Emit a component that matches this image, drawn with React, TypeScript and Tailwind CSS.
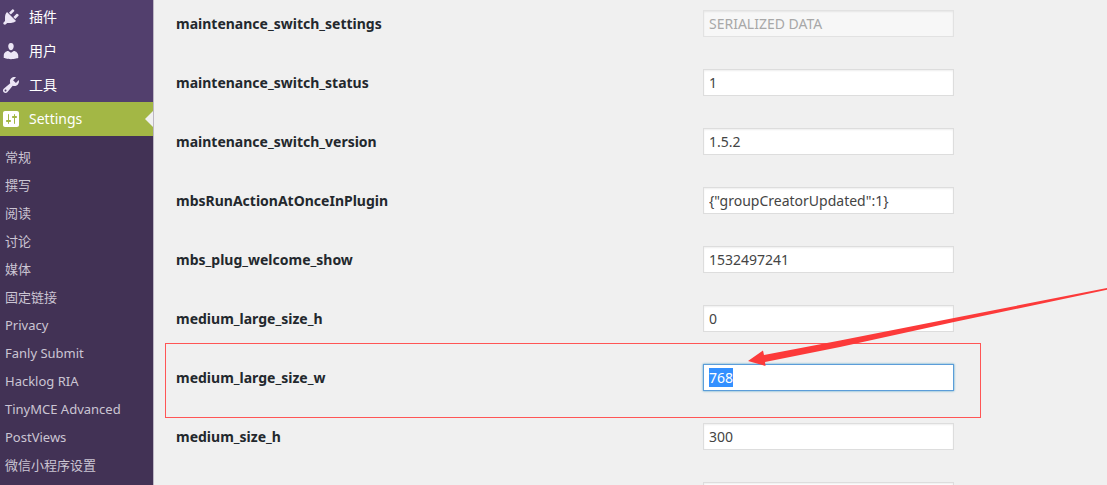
import { useEffect, useRef } from "react";

const menu = [
  {
    label: "插件",
    icon: "M13.11 4.36L9.87 7.6 8 5.73l3.24-3.24c.35-.34 1.05-.2 1.56.32.52.51.66 1.21.31 1.55zm-8 1.77l.91-1.12 9.01 9.01-1.19.84c-.71.71-2.63 1.16-3.82 1.16H6.14L4.9 17.26c-.59.59-1.54.59-2.12 0-.59-.58-.59-1.53 0-2.12l1.24-1.24v-3.88c0-1.13.4-3.19 1.09-3.89zm7.26 3.97l3.24-3.24c.34-.35 1.04-.21 1.55.31.52.51.66 1.21.31 1.55l-3.24 3.25z",
  },
  {
    label: "用户",
    icon: "M10 9.25c-2.27 0-2.73-3.44-2.73-3.44C7 4.02 7.82 2 9.97 2c2.16 0 2.98 2.02 2.71 3.81 0 0-.41 3.44-2.68 3.44zm0 2.57L12.72 10c2.39 0 4.52 2.33 4.52 4.53v2.49s-3.65 1.13-7.24 1.13c-3.65 0-7.24-1.13-7.24-1.13v-2.49c0-2.25 1.94-4.48 4.47-4.48z",
  },
  {
    label: "工具",
    icon: "M16.68 9.77c-1.34 1.34-3.3 1.67-4.95.99l-5.41 6.52c-.99.99-2.59.99-3.58 0s-.99-2.59 0-3.57l6.52-5.42c-.68-1.65-.35-3.61.99-4.95 1.28-1.28 3.12-1.62 4.72-1.06l-2.89 2.89 2.82 2.82 2.86-2.87c.53 1.58.18 3.39-1.08 4.65zM3.81 16.21c.4.39 1.04.39 1.43 0 .4-.4.4-1.04 0-1.43-.39-.4-1.03-.4-1.43 0-.39.39-.39 1.03 0 1.43z",
  },
  {
    label: "Settings",
    active: true,
    icon: "M18 16V4c0-1.1-.9-2-2-2H4c-1.1 0-2 .9-2 2v12c0 1.1.9 2 2 2h12c1.1 0 2-.9 2-2zM8 11h1c.55 0 1 .45 1 1s-.45 1-1 1H8v1.5c0 .28-.22.5-.5.5s-.5-.22-.5-.5V13H6c-.55 0-1-.45-1-1s.45-1 1-1h1V5.5c0-.28.22-.5.5-.5s.5.22.5.5V11zm5-2h-1c-.55 0-1-.45-1-1s.45-1 1-1h1V5.5c0-.28.22-.5.5-.5s.5.22.5.5V7h1c.55 0 1 .45 1 1s-.45 1-1 1h-1v5.5c0 .28-.22.5-.5.5s-.5-.22-.5-.5V9z",
  },
];

const submenu = [
  "常规",
  "撰写",
  "阅读",
  "讨论",
  "媒体",
  "固定链接",
  "Privacy",
  "Fanly Submit",
  "Hacklog RIA",
  "TinyMCE Advanced",
  "PostViews",
  "微信小程序设置",
];

const options = [
  { name: "maintenance_switch_settings", value: "SERIALIZED DATA", disabled: true },
  { name: "maintenance_switch_status", value: "1" },
  { name: "maintenance_switch_version", value: "1.5.2" },
  { name: "mbsRunActionAtOnceInPlugin", value: '{"groupCreatorUpdated":1}' },
  { name: "mbs_plug_welcome_show", value: "1532497241" },
  { name: "medium_large_size_h", value: "0" },
  { name: "medium_large_size_w", value: "768", selected: true },
  { name: "medium_size_h", value: "300" },
  { name: "medium_size_w", value: "300" },
];

function Sidebar() {
  return (
    <nav className="w-[154px] shrink-0 border-r border-[#bdb7c4] bg-[#523f6d]">
      <ul>
        {menu.map((item) => (
          <li key={item.label}>
            <a
              href="#"
              className={
                item.active
                  ? "relative flex h-[34px] items-center gap-2 bg-[#a3b745] fill-white pl-px text-sm text-white"
                  : "flex h-[34px] items-center gap-2 fill-[#ece6f6] pl-px text-sm text-white"
              }
            >
              <svg viewBox="0 0 20 20" className="size-5" aria-hidden="true">
                <path d={item.icon} />
              </svg>
              {item.label}
              {item.active && (
                <span className="absolute top-1/2 right-0 -translate-y-1/2 border-8 border-transparent border-r-[#f0f0f0]" />
              )}
            </a>
          </li>
        ))}
      </ul>
      <ul className="h-full bg-[#423255] pt-2">
        {submenu.map((label) => (
          <li key={label}>
            <a href="#" className="flex h-7 items-center pl-[5px] text-[13px] text-[#cbc5d3]">
              {label}
            </a>
          </li>
        ))}
      </ul>
    </nav>
  );
}

export default function App() {
  const selectedRef = useRef<HTMLInputElement>(null);

  useEffect(() => {
    selectedRef.current?.focus({ preventScroll: true });
    selectedRef.current?.select();
  }, []);

  return (
    <div className="flex h-screen overflow-hidden bg-[#f0f0f0] font-['Noto_Sans','Noto_Sans_CJK_SC',sans-serif]">
      <Sidebar />
      <main className="relative min-w-0 flex-1 pt-[10px] pl-[22px]">
        <table className="w-full table-fixed">
          <tbody>
            {options.map((option) => (
              <tr key={option.name} className="h-[59px] align-top">
                <th scope="row" className="w-[527px] pt-1 text-left text-sm leading-5 font-bold text-[#23282d]">
                  <label htmlFor={option.name} className="block">
                    {option.name}
                  </label>
                </th>
                <td>
                  <input
                    id={option.name}
                    ref={option.selected ? selectedRef : undefined}
                    type="text"
                    defaultValue={option.value}
                    disabled={option.disabled}
                    className="block h-[27px] w-[251px] border border-[#dddddd] bg-white px-[5px] text-sm text-[#444444] shadow-[inset_0_1px_2px_rgba(0,0,0,0.07)] outline-none selection:bg-[#3390ff] selection:text-white focus:border-[#5b9dd9] focus:shadow-[0_0_2px_rgba(30,140,190,0.8)] disabled:border-[#e2e2e2] disabled:bg-[#f7f7f7] disabled:text-[#a8a8a8]"
                  />
                </td>
              </tr>
            ))}
          </tbody>
        </table>

        {/* red marker around medium_large_size_w */}
        <div className="pointer-events-none absolute top-[343px] left-[11px] h-[75px] w-[816px] border border-[#ff5555]" />
        <svg
          viewBox="0 0 360 80"
          className="pointer-events-none absolute top-[287px] left-[594px] h-20 w-[360px] fill-[#fc3a3a]"
          aria-hidden="true"
        >
          <path d="M0 74 15 63.500 16 68 92 53.500 206 31 360 .7V2.500L206 35 92 60 17 75 17.500 79Z" />
        </svg>
      </main>
    </div>
  );
}
